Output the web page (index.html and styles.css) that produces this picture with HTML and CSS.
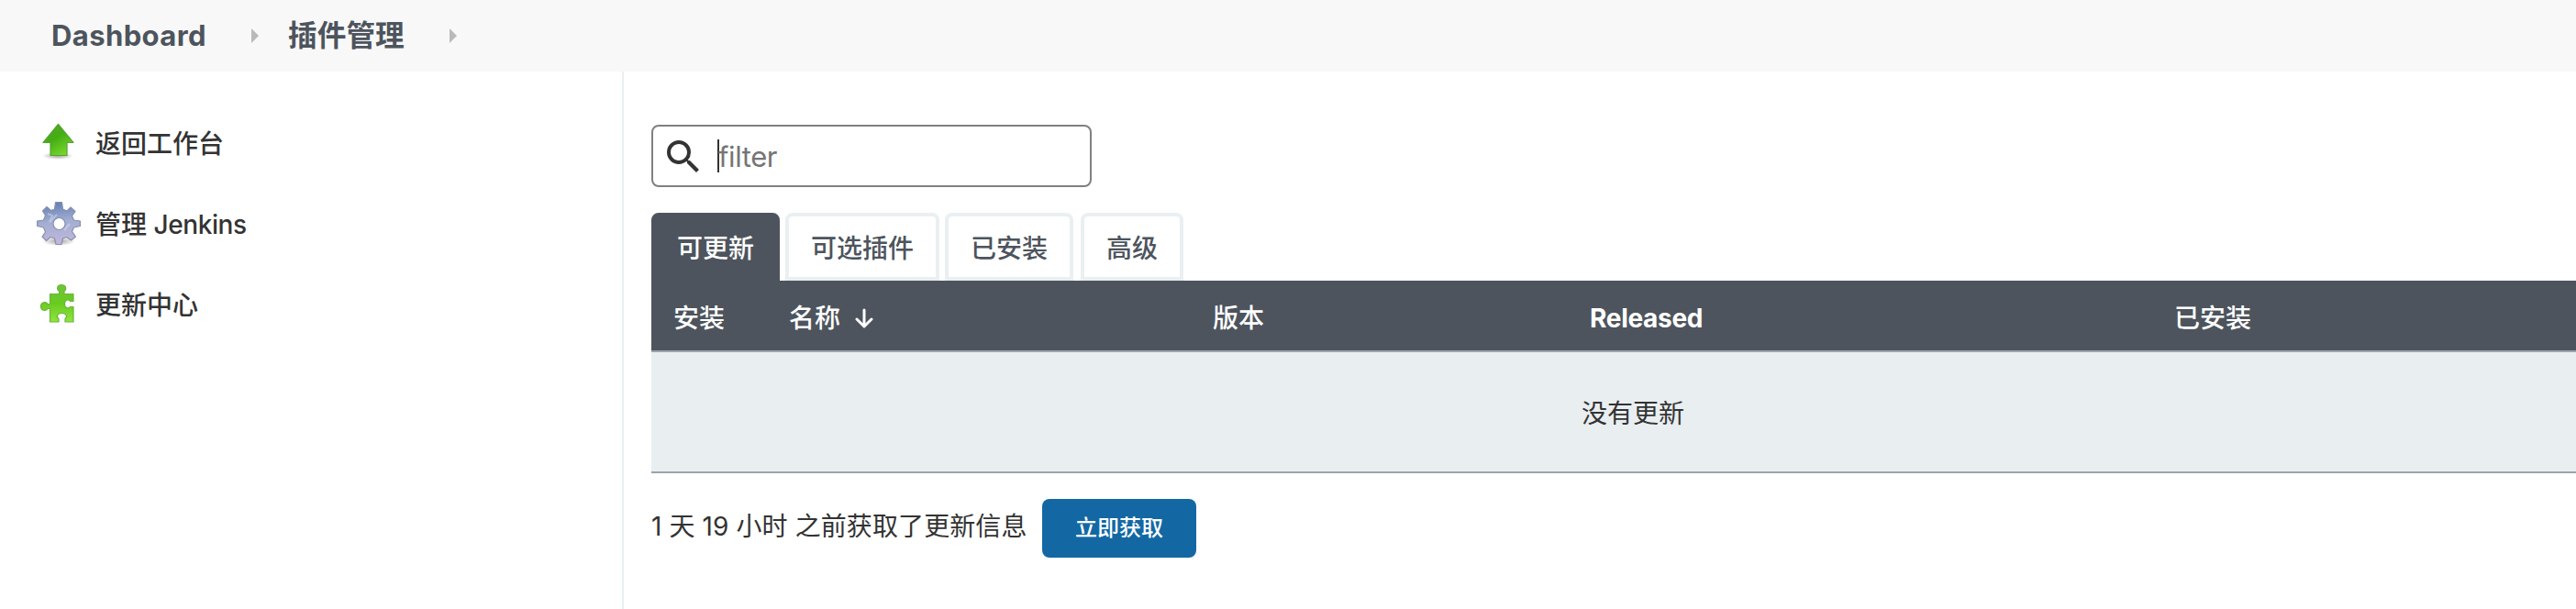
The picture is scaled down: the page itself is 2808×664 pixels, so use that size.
FILE: index.html
```html
<!DOCTYPE html>
<html lang="zh-CN">
<head>
<meta charset="utf-8">
<title>插件管理 [Jenkins]</title>
<link rel="stylesheet" href="styles.css">
</head>
<body>
<nav class="breadcrumbs">
  <a class="crumb crumb-home">Dashboard</a>
  <svg class="chevron" viewBox="0 0 8 16"><path d="M0 0L8 8L0 16Z"/></svg>
  <a class="crumb crumb-page">插件管理</a>
  <svg class="chevron" viewBox="0 0 8 16"><path d="M0 0L8 8L0 16Z"/></svg>
</nav>
<div class="page">
  <aside class="sidebar">
    <a class="task">
      <svg class="task-icon" viewBox="0 0 48 48">
        <defs>
          <linearGradient id="arrow" x1="0" y1="0" x2="0.6" y2="1"><stop offset="0" stop-color="#58a52c"/><stop offset="0.5" stop-color="#43ad13"/><stop offset="1" stop-color="#74d62a"/></linearGradient>
          <radialGradient id="shade"><stop offset="0" stop-color="#555" stop-opacity="0.55"/><stop offset="1" stop-color="#555" stop-opacity="0"/></radialGradient>
        </defs>
        <ellipse cx="23" cy="38" rx="17" ry="4" fill="url(#shade)"/>
        <path d="M23.500 3.500L40 23.500H33V37.500H15V23.500H7Z" fill="url(#arrow)" stroke="#57a331" stroke-width="1.200" stroke-linejoin="round"/>
      </svg>
      <span class="task-label">返回工作台</span>
    </a>
    <a class="task">
      <svg class="task-icon" viewBox="0 0 48 48">
        <defs>
          <linearGradient id="gear" x1="0.5" y1="0" x2="0.6" y2="1"><stop offset="0" stop-color="#6480b4"/><stop offset="0.45" stop-color="#a2aed2"/><stop offset="1" stop-color="#c3b7db"/></linearGradient>
        </defs>
        <ellipse cx="24" cy="43" rx="18" ry="5" fill="url(#shade)"/>
        <path fill-rule="evenodd" fill="url(#gear)" stroke="#8790ae" stroke-width="1.200" stroke-linejoin="round" d="M20.500 .6H27.500L28.500 8L33 10L37 6L42 10.500L38.500 15.500L40.500 20L47.400 21V26.500L40.500 28L38.500 32.500L42.500 38L37.500 42L32.500 38.500L28.500 40L27 46.500H21L19.500 40L15 38.500L10.500 42.500L6 38L9.500 33L7.500 28L.6 26.500V21L7.500 20L9.500 15L6.500 10L11 5.500L15.500 9.500L19.500 8ZM24.500 17.500A6.500 6.500 0 1 0 24.500 30.500A6.500 6.500 0 1 0 24.500 17.500Z"/>
        <path d="M12 13L17 15L14 22L22 14M30 31L36 24" fill="none" stroke="#dfe5f5" stroke-width="2" opacity="0.45"/>
      </svg>
      <span class="task-label">管理 <span class="latin">Jenkins</span></span>
    </a>
    <a class="task">
      <svg class="task-icon" viewBox="0 0 48 48">
        <defs>
          <linearGradient id="puzzle" x1="0" y1="0" x2="0" y2="1"><stop offset="0" stop-color="#6fc33b"/><stop offset="0.5" stop-color="#68cb20"/><stop offset="1" stop-color="#91e53c"/></linearGradient>
        </defs>
        <path fill="url(#puzzle)" stroke="#69b63a" stroke-width="1.200" stroke-linejoin="round" d="M14.500 12.500H24.500V9.500C21.500 7.500 22 2.500 27 2.500S33 7.500 30 9.500V12.500H40V20.500H36.500C34.500 17.500 30.500 19 30.500 23.500S34.500 29 36.500 26.500H40V43H31V39.500C34 37.500 32.500 33.500 27.500 33.500S20.500 37.500 24 39.500V43H14.500V28.500H12C10 32 4.500 30.500 4.500 26S10 20 12 23.500H14.500Z"/>
      </svg>
      <span class="task-label">更新中心</span>
    </a>
  </aside>
  <main class="content">
    <label class="search">
      <svg class="search-icon" viewBox="0 0 24 24"><path d="M15.500 14h-.79l-.28-.27A6.471 6.471 0 0 0 16 9.500 6.500 6.500 0 1 0 9.500 16c1.610 0 3.090-.59 4.230-1.570l.27.28v.79l5 4.990L20.490 19l-4.990-5zm-6 0C7.010 14 5 11.990 5 9.500S7.010 5 9.500 5 14 7.010 14 9.500 11.990 14 9.500 14z"/></svg>
      <span class="caret"></span>
      <span class="placeholder">filter</span>
    </label>
    <div class="tabs">
      <a class="tab tab-active">可更新</a>
      <a class="tab">可选插件</a>
      <a class="tab">已安装</a>
      <a class="tab tab-last">高级</a>
    </div>
    <div class="table">
      <div class="thead">
        <span>安装</span>
        <span class="sorted">名称 <svg class="sort-arrow" viewBox="0 0 20 22"><path d="M10 2V20M2 12L10 20L18 12"/></svg></span>
        <span>版本</span>
        <span class="released">Released</span>
        <span>已安装</span>
      </div>
      <div class="empty">没有更新</div>
    </div>
    <div class="footer">
      <span class="status">1 天 19 小时 之前获取了更新信息</span>
      <button class="button">立即获取</button>
    </div>
  </main>
</div>
</body>
</html>
```
FILE: styles.css
```css
* { box-sizing: border-box; }
body {
  margin: 0;
  height: 664px;
  overflow: hidden;
  background: #fff;
  color: #333;
  font-family: Inter, "Noto Sans CJK SC", sans-serif;
  font-size: 28px;
}
.breadcrumbs {
  display: flex;
  align-items: center;
  height: 78px;
  padding-left: 56px;
  background: #f8f8f8;
  color: #4d545d;
  font-size: 31px;
  font-weight: 700;
}
.crumb { white-space: nowrap; line-height: 78px; }
.crumb-home { width: 218px; letter-spacing: 0.4px; }
.crumb-page { width: 176px; margin-left: 32px; font-size: 31.700px; }
.chevron { width: 8px; height: 16px; fill: #b9b9b9; }
.page { display: flex; height: 586px; }
.sidebar {
  flex: none;
  width: 680px;
  padding: 34px 0 0 40px;
  border-right: 2px solid #eaeff2;
}
.task {
  display: flex;
  align-items: center;
  gap: 16px;
  height: 88px;
  font-weight: 500;
}
.task-icon { width: 48px; height: 48px; }
.task-label { padding-bottom: 2px; }
.latin { letter-spacing: -0.4px; }
.content { flex: none; width: 2170px; padding: 58px 0 0 30px; }
.search {
  display: flex;
  align-items: center;
  width: 480px;
  height: 68px;
  padding-left: 9px;
  border: 2px solid #808080;
  border-radius: 8px;
}
.search-icon { width: 48px; height: 48px; margin-top: 2px; fill: #333; }
.caret { width: 2px; height: 36px; margin-left: 13px; background: #333; }
.placeholder { margin-left: -1px; padding-top: 2px; color: #757575; font-size: 31px; letter-spacing: -0.4px; line-height: 62px; }
.tabs { display: flex; gap: 6px; margin-top: 28px; }
.tab {
  height: 74px;
  padding: 0 24px;
  border: 4px solid #eaeff2;
  border-radius: 8px 8px 0 0;
  color: #4d545d;
  font-weight: 500;
  line-height: 70px;
}
.tab-active { border-color: #4d545d; background: #4d545d; color: #fff; }
.tab-last { margin-left: 2px; }
.table { width: 2140px; }
.thead {
  display: grid;
  grid-template-columns: 126px 462px 411px 637px 1fr;
  align-items: center;
  height: 78px;
  padding: 6px 0 0 24px;
  border-bottom: 2px solid #9ba3ab;
  background: #4d545d;
  color: #fff;
  font-weight: 500;
  line-height: 70px;
}
.sorted { display: flex; align-items: center; gap: 16px; }
.released { font-weight: 700; letter-spacing: -0.3px; }
.sort-arrow {
  width: 20px;
  height: 22px;
  fill: none;
  stroke: #fff;
  stroke-width: 3;
  stroke-linecap: round;
  stroke-linejoin: round;
}
.empty {
  height: 132px;
  padding-top: 4px;
  border-bottom: 2px solid #9ba3ab;
  background: #e9eef1;
  text-align: center;
  line-height: 126px;
}
.footer { display: flex; align-items: center; margin-top: 28px; }
.status { width: 426px; height: 64px; line-height: 60px; letter-spacing: 0.1px; white-space: nowrap; }
.button {
  width: 168px;
  height: 64px;
  padding: 0;
  border: 0;
  border-radius: 8px;
  background: #1368a3;
  color: #fff;
  font: 500 24px/64px Inter, "Noto Sans CJK SC", sans-serif;
}
```
